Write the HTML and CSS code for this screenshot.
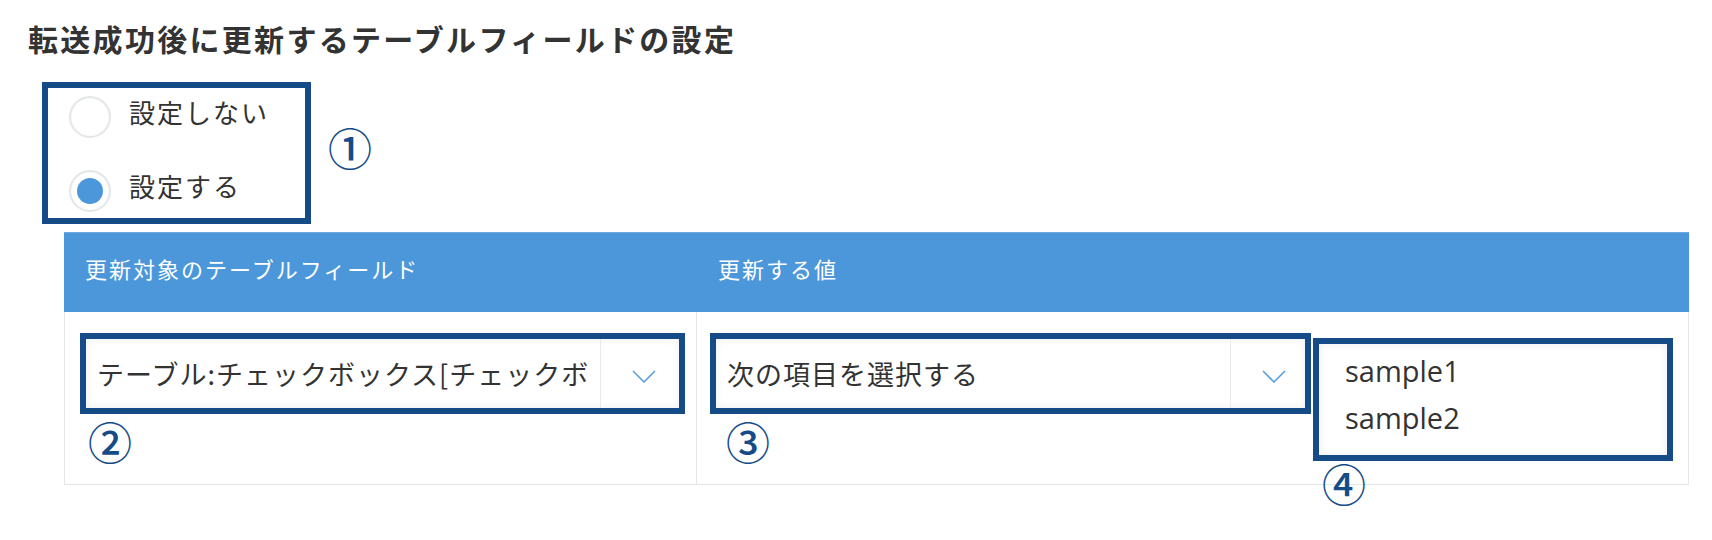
FILE: index.html
```html
<!DOCTYPE html>
<html lang="ja">

<head>
  <meta charset="UTF-8">
  <meta name="viewport" content="width=device-width, initial-scale=1.0">
  <title>テーブルフィールドの設定</title>
  <link rel="stylesheet" href="styles.css">
</head>

<body>
  <section class="page">
    <h2 class="title">転送成功後に更新するテーブルフィールドの設定</h2>

    <div class="radio-area">
      <div class="note-box radio-box">
        <label class="radio">
          <span class="radio-circle"></span>
          <span class="radio-label">設定しない</span>
        </label>
        <label class="radio is-checked">
          <span class="radio-circle"></span>
          <span class="radio-label">設定する</span>
        </label>
      </div>
      <span class="num num-1">①</span>
    </div>

    <div class="field-table">
      <div class="table-head">
        <div class="th">更新対象のテーブルフィールド</div>
        <div class="th">更新する値</div>
      </div>
      <div class="table-body">
        <div class="td td-field">
          <div class="note-box select-note select-note-field">
            <div class="select">
              <span class="select-text">テーブル:チェックボックス[チェックボ</span>
              <span class="select-arrow">
                <svg width="24" height="13" viewBox="0 0 24 13"><polyline points="1,1 12,12 23,1" /></svg>
              </span>
            </div>
          </div>
          <span class="num num-2">②</span>
        </div>
        <div class="td td-value">
          <div class="value-col">
            <div class="note-box select-note select-note-value">
              <div class="select">
                <span class="select-text">次の項目を選択する</span>
                <span class="select-arrow">
                  <svg width="24" height="13" viewBox="0 0 24 13"><polyline points="1,1 12,12 23,1" /></svg>
                </span>
              </div>
            </div>
            <span class="num num-3">③</span>
          </div>
          <div class="value-col sample-col">
            <div class="note-box sample-note">
              <ul class="sample-list">
                <li>sample1</li>
                <li>sample2</li>
              </ul>
            </div>
            <span class="num num-4">④</span>
          </div>
        </div>
      </div>
    </div>
  </section>
</body>

</html>
```

FILE: styles.css
```css
body {
  margin: 0;
  background: #fff;
  color: #333;
  font-family: "Noto Sans CJK JP", sans-serif;
}

.page {
  padding: 18px 0 60px 28px;
}

.title {
  margin: 0;
  font-size: 30px;
  line-height: 40px;
  letter-spacing: 2.3px;
  font-weight: bold;
  color: #333;
}

/* 注釈の枠 */
.note-box {
  box-sizing: border-box;
  border: 6px solid #154c88;
  background: #fff;
}

.num {
  display: block;
  width: 40px;
  height: 40px;
  font-size: 44px;
  font-weight: 500;
  line-height: 35px;
  text-align: center;
  color: #154c88;
}

/* ラジオ */
.radio-area {
  display: flex;
  align-items: center;
  margin: 24px 0 0 14px;
}

.radio-box {
  display: flex;
  flex-direction: column;
  gap: 32px;
  width: 269px;
  height: 142px;
  padding: 8px 0 0 21px;
}

.radio {
  display: flex;
  align-items: center;
}

.radio-circle {
  box-sizing: border-box;
  display: flex;
  align-items: center;
  justify-content: center;
  width: 42px;
  height: 42px;
  border: 2px solid #e3e7e8;
  border-radius: 50%;
  box-shadow: inset 0 0 2px #eef0f0;
}

.is-checked .radio-circle::after {
  content: "";
  width: 26px;
  height: 26px;
  border-radius: 50%;
  background: #4b97da;
}

.radio-label {
  margin-left: 18px;
  padding-bottom: 10px;
  font-size: 26px;
  letter-spacing: 2px;
  line-height: 1.2;
}

.num-1 {
  margin: 0 0 6px 17px;
}

/* テーブル */
.field-table {
  width: 1625px;
  margin: 8px 0 0 36px;
}

.table-head {
  display: grid;
  grid-template-columns: 633px 1fr;
  height: 80px;
  background: #4b97da;
  border-top: 1px solid #6eaae2;
  box-sizing: border-box;
}

.th {
  display: flex;
  align-items: center;
  padding: 0 0 10px 21px;
  font-size: 22px;
  letter-spacing: 2px;
  color: #fff;
}

.table-body {
  box-sizing: border-box;
  display: grid;
  grid-template-columns: 632px 1fr;
  grid-template-rows: 172px;
  border: 1px solid #e3e7e8;
  border-top: none;
}

.td {
  box-sizing: border-box;
  padding-top: 21px;
}

.td-field {
  border-right: 1px solid #e3e7e8;
  padding-left: 15px;
}

.td-value {
  display: flex;
  gap: 2px;
  padding-left: 13px;
}

.select-note-field {
  width: 605px;
  height: 81px;
}

.select-note-value {
  width: 601px;
  height: 81px;
}

.select {
  display: flex;
  height: 100%;
  box-shadow: inset 0 0 8px rgba(0, 0, 0, 0.07);
}

.select-text {
  width: 514px;
  padding-left: 11px;
  box-sizing: border-box;
  overflow: hidden;
  white-space: nowrap;
  font-size: 27px;
  letter-spacing: 1px;
  line-height: 69px;
  color: #333;
}

.select-arrow {
  flex: 1;
  display: flex;
  align-items: center;
  padding: 6px 0 0 31px;
  border-left: 1px solid #e8ebeb;
}

.select-arrow polyline {
  fill: none;
  stroke: #5a9fe0;
  stroke-width: 1.6;
}

.num-2 {
  margin: 10px 0 0 8px;
}

.num-3 {
  margin: 10px 0 0 16px;
}

/* 候補値 */
.sample-col {
  margin-top: 5px;
}

.sample-note {
  width: 360px;
  height: 123px;
  box-shadow: inset 0 0 10px rgba(0, 0, 0, 0.07);
}

.sample-list {
  list-style: none;
  margin: 0;
  padding: 3px 0 0 26px;
  font-family: "Open Sans", "Noto Sans CJK JP", sans-serif;
  font-size: 29px;
  line-height: 47px;
  color: #333;
}

.num-4 {
  margin: 5px 0 0 9px;
}
```
